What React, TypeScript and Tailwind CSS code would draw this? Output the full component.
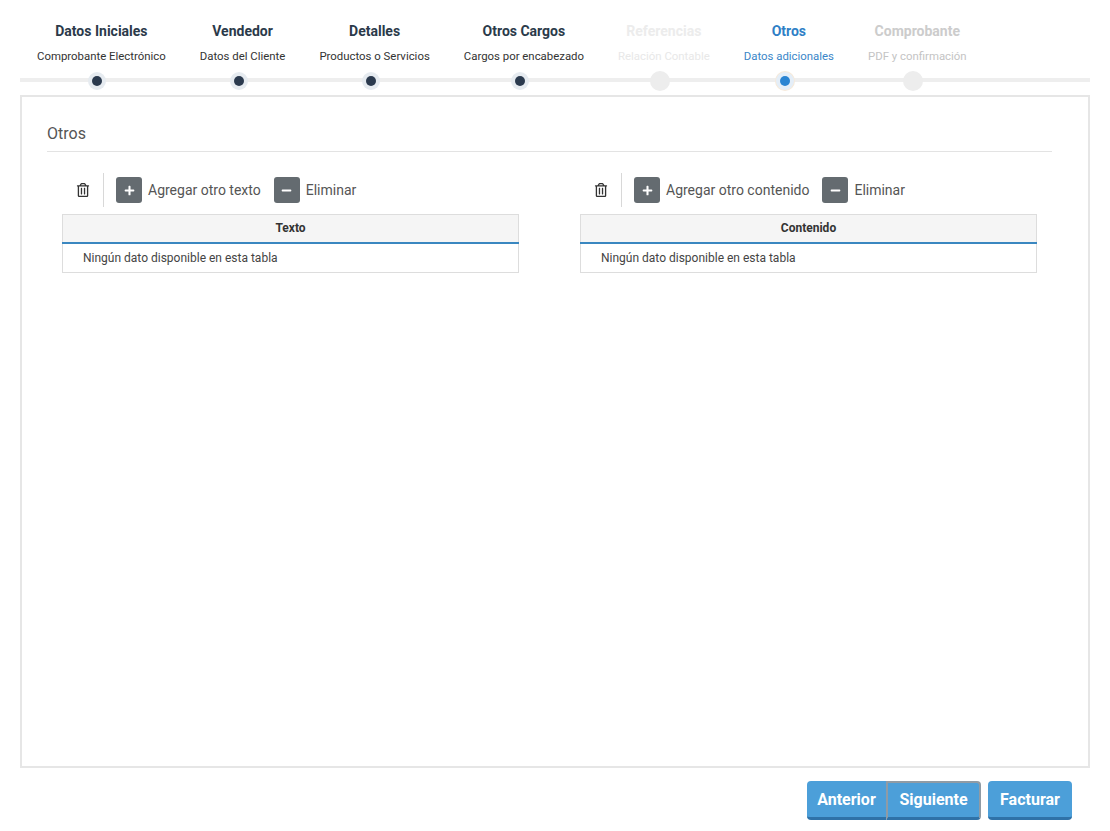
import { FaMinus, FaPlus, FaRegTrashAlt } from "react-icons/fa";

type Step = { title: string; sub: string; state: "done" | "active" | "off" | "next" };

const STEPS: Step[] = [
  { title: "Datos Iniciales", sub: "Comprobante Electrónico", state: "done" },
  { title: "Vendedor", sub: "Datos del Cliente", state: "done" },
  { title: "Detalles", sub: "Productos o Servicios", state: "done" },
  { title: "Otros Cargos", sub: "Cargos por encabezado", state: "done" },
  { title: "Referencias", sub: "Relación Contable", state: "off" },
  { title: "Otros", sub: "Datos adicionales", state: "active" },
  { title: "Comprobante", sub: "PDF y confirmación", state: "next" },
];

function StepItem({ step }: { step: Step }) {
  const titleColor =
    step.state === "done"
      ? "text-[#2b3a4a]"
      : step.state === "active"
        ? "text-[#2f7fc6]"
        : step.state === "off"
          ? "text-[#ececec]"
          : "text-[#cccccc]";
  const subColor =
    step.state === "done"
      ? "text-[#333333]"
      : step.state === "active"
        ? "text-[#3a86c8]"
        : step.state === "off"
          ? "text-[#e8e8e8]"
          : "text-[#c4c4c4]";
  return (
    <div className="flex flex-col items-center px-[17px] pt-[21px]">
      <div className={`text-[14px] font-bold leading-[20px] ${titleColor}`}>
        {step.title}
      </div>
      <div className={`mt-[7px] text-[11.4px] leading-[16px] ${subColor}`}>
        {step.sub}
      </div>
      {/* dot */}
      <div className="mt-[7px] flex h-[20px] w-[20px] -translate-x-[4px] items-center justify-center">
        {step.state === "done" && (
          <div className="flex h-[18px] w-[18px] items-center justify-center rounded-full bg-[#e6ebf0]">
            <div className="h-[10px] w-[10px] rounded-full bg-[#2b3a4e]" />
          </div>
        )}
        {step.state === "active" && (
          <div className="flex h-[18px] w-[18px] items-center justify-center rounded-full bg-[#e4eef8] ring-1 ring-[#f6eadb]">
            <div className="h-[10px] w-[10px] rounded-full bg-[#2a84d2]" />
          </div>
        )}
        {(step.state === "off" || step.state === "next") && (
          <div className="h-[20px] w-[20px] rounded-full bg-[#ededed]" />
        )}
      </div>
    </div>
  );
}

function Toolbar({ label }: { label: string }) {
  return (
    <div className="flex h-[34px] items-center pl-[14px] text-[14px] text-[#555555]">
      <FaRegTrashAlt className="text-[#333333]" size={14} />
      <div className="ml-[13px] h-[34px] w-px bg-[#d8d8d8]" />
      <button className="ml-[12px] flex h-[26px] w-[26px] items-center justify-center rounded-[3px] bg-[#646b70] text-white">
        <FaPlus size={11} />
      </button>
      <span className="ml-[6px]">{label}</span>
      <button className="ml-[13px] flex h-[26px] w-[26px] items-center justify-center rounded-[3px] bg-[#646b70] text-white">
        <FaMinus size={11} />
      </button>
      <span className="ml-[6px]">Eliminar</span>
    </div>
  );
}

function EmptyTable({ column }: { column: string }) {
  return (
    <table className="mt-[7px] w-full border-collapse text-[12px]">
      <thead>
        <tr>
          <th className="h-[28px] border border-b-2 border-[#dddddd] border-b-[#3a87c0] bg-[#f5f5f5] text-center font-bold text-[#333333]">
            {column}
          </th>
        </tr>
      </thead>
      <tbody>
        <tr>
          <td className="h-[30px] border border-[#dddddd] pl-[20px] text-[#444444]">
            Ningún dato disponible en esta tabla
          </td>
        </tr>
      </tbody>
    </table>
  );
}

export default function App() {
  return (
    <main
      className="h-[831px] w-full bg-white"
      style={{ fontFamily: "Roboto, 'Liberation Sans', sans-serif" }}
    >
      {/* steps */}
      <section className="relative mx-[20px]">
        <div className="absolute bottom-[9px] left-0 right-0 h-[4px] bg-[#eeeeee]" />
        <div className="relative flex">
          {STEPS.map((s) => (
            <StepItem key={s.title} step={s} />
          ))}
        </div>
      </section>

      {/* panel */}
      <section className="mx-[20px] mt-[4px] h-[673px] border-2 border-[#e6e6e6] pl-[25px] pr-[36px]">
        <div className="border-b border-[#e3e3e3] pb-[7px] pt-[27px] text-[16px] leading-[20px] text-[#555555]">
          Otros
        </div>
        <div className="mt-[21px] flex gap-[61px] pl-[15px]">
          <div className="w-[457px]">
            <Toolbar label="Agregar otro texto" />
            <EmptyTable column="Texto" />
          </div>
          <div className="w-[457px]">
            <Toolbar label="Agregar otro contenido" />
            <EmptyTable column="Contenido" />
          </div>
        </div>
      </section>

      {/* buttons */}
      <div className="mr-[38px] mt-[13px] flex justify-end gap-[7px]">
        <div className="flex">
          <button className="h-[39px] w-[79px] rounded-l-[4px] border-b-[3px] border-[#2f72a8] bg-[#4c9fd9] pt-[2px] text-[16px] font-bold text-white">
            Anterior
          </button>
          <button className="h-[39px] w-[95px] rounded-r-[4px] border-2 border-b-[3px] border-[#8f9ba5] border-b-[#2f72a8] bg-[#4c9fd9] text-[16px] font-bold text-white">
            Siguiente
          </button>
        </div>
        <button className="h-[39px] w-[84px] rounded-[4px] border-b-[3px] border-[#2f72a8] bg-[#4c9fd9] pt-[2px] text-[16px] font-bold text-white">
          Facturar
        </button>
      </div>
    </main>
  );
}
